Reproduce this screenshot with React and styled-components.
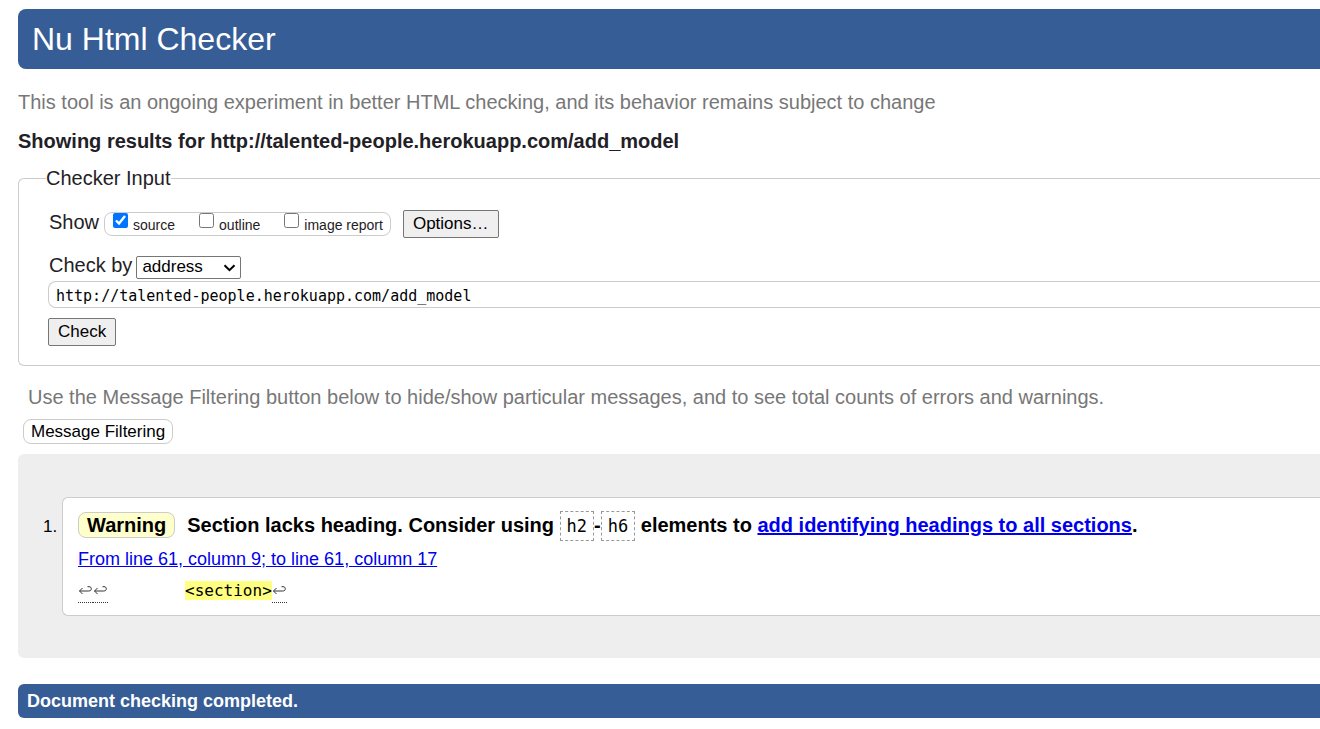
import React from "react";
import styled, { createGlobalStyle } from "styled-components";

const mono = `"DejaVu Sans Mono", "Liberation Mono", monospace`;

const GlobalStyle = createGlobalStyle`
  *, *::before, *::after { box-sizing: border-box; }
  body {
    margin: 0;
    background: #fff;
    color: #1f2126;
    font: 20px/26px "Liberation Sans", Arial, sans-serif;
  }
  button, input, select { font-family: inherit; color: #000; margin: 0; }
`;

const Page = styled.div`
  display: flex;
  flex-direction: column;
  padding: 9px 0 11px 18px;
`;

const Banner = styled.h1`
  margin: 0 0 20px;
  padding: 10px 14px;
  border-radius: 8px 0 0 8px;
  background: #365d95;
  color: #fff;
  font-size: 32px;
  line-height: 40px;
  font-weight: 400;
`;

const Note = styled.p`
  margin: 0;
  color: #777;
`;

const ResultsTitle = styled.h2`
  margin: 13px 0 11px;
  font-size: 20px;
  line-height: 26px;
`;

const InputGroup = styled.fieldset`
  display: flex;
  flex-direction: column;
  min-width: 0;
  margin: 0;
  padding: 19px 0 19px 29px;
  border: 1px solid #ccc;
  border-right: 0;
  border-radius: 6px 0 0 6px;
`;

const GroupTitle = styled.legend`
  margin-left: -2px;
  padding: 0;
`;

const Row = styled.div`
  display: flex;
  align-items: center;
  height: 28px;
  gap: ${(p) => p.$gap}px;
  margin-bottom: ${(p) => p.$after || 0}px;
  padding-left: 1px;
`;

const RowLabel = styled.label`
  align-self: flex-start;
  line-height: 24px;
`;

const ShowSet = styled.div`
  display: flex;
  align-items: center;
  gap: 24px;
  height: 24px;
  margin-right: 7px;
  padding: 0 7px 0 8px;
  border: 1px solid #ccc;
  border-radius: 8px;
`;

const CheckLabel = styled.label`
  display: flex;
  align-items: flex-start;
  gap: 5px;
  height: 22px;
  font-size: 14px;
  line-height: 24px;

  input { width: 15px; height: 15px; }
`;

const Button = styled.button`
  align-self: flex-start;
  height: 28px;
  padding: 0 9px;
  border: 1px solid #767676;
  border-radius: 2px;
  background: #efefef;
  font-size: 17px;
  line-height: 24px;
`;

const SelectBox = styled.span`
  position: relative;
  display: flex;

  svg {
    position: absolute;
    right: 5px;
    top: 8px;
    pointer-events: none;
  }
`;

const MethodSelect = styled.select`
  appearance: none;
  width: 105px;
  height: 23px;
  padding: 0 5px;
  border: 1px solid #767676;
  border-radius: 2px;
  background: #fff;
  font-size: 17px;
  line-height: 20px;
`;

const AddressInput = styled.input`
  width: 100%;
  height: 27px;
  && { margin-bottom: 10px; }
  padding: 2px 7px 0;
  border: 1px solid #ccc;
  border-right: 0;
  border-radius: 8px 0 0 8px;
  && { font-family: ${mono}; }
  font-size: 15px;
`;

const FilterNote = styled(Note)`
  margin: 18px 0 9px 10px;
`;

const FilterButton = styled.button`
  align-self: flex-start;
  height: 25px;
  && { margin: 0 0 10px 5px; }
  padding: 0 7px;
  border: 1px solid #ccc;
  border-radius: 8px;
  background: #fff;
  font-size: 17px;
  line-height: 22px;
`;

const Results = styled.ol`
  margin: 0;
  padding: 43px 0 42px 44px;
  border-radius: 6px 0 0 6px;
  background: #eee;
  color: #000;
  font-size: 17px;
`;

const Message = styled.li`
  padding: 12px 0 9px 15px;
  border: 1px solid #ccc;
  border-right: 0;
  border-radius: 6px 0 0 6px;
  background: #fff;
`;

const MessageText = styled.p`
  margin: 0;
  font-size: 20px;
  line-height: 30px;
  font-weight: 700;
`;

const Badge = styled.strong`
  margin-right: 12px;
  padding: 1px 8px;
  border: 1px solid #ccc;
  border-radius: 8px;
  background: #ffc;
`;

const Code = styled.code`
  padding: 4px 6px;
  border: 1px dashed #999;
  font: 400 17px/26px ${mono};
`;

const Location = styled.p`
  margin: 6px 0 4px;
  font-size: 18px;
  line-height: 26px;
`;

const Link = styled.a`
  color: #00e;
  text-decoration: underline;
`;

const Extract = styled.code`
  display: block;
  white-space: pre;
  font: 16px/30px ${mono};

  mark { background: #ffff80; color: #000; }
`;

const LineBreak = styled.span`
  display: inline-block;
  width: 15px;
  height: 22px;
  border-bottom: 1px dotted #333;
  vertical-align: middle;

  svg { display: block; margin-top: 4px; }
`;

const Done = styled.p`
  margin: 26px 0 0;
  padding: 4px 9px;
  border-radius: 6px 0 0 6px;
  background: #365d95;
  color: #fff;
  font-size: 18px;
  line-height: 26px;
  font-weight: 700;
`;

function Newline() {
  return (
    <LineBreak>
      <svg width="15" height="11" viewBox="0 0 15 11" fill="none" stroke="#333" role="img" aria-label="line break">
        <path d="M4.5 3 1.5 6l3 3M1.5 6h9.2c1.8 0 2.6-.9 2.6-2.2 0-1.3-.8-2.1-2.3-2.1H9.5" />
      </svg>
    </LineBreak>
  );
}

const views = [
  { name: "source", on: true },
  { name: "outline", on: false },
  { name: "image report", on: false },
];

export default function App() {
  return (
    <>
      <GlobalStyle />
      <Page>
        <Banner>Nu Html Checker</Banner>
        <Note>
          This tool is an ongoing experiment in better HTML checking, and its behavior remains subject to change
        </Note>
        <ResultsTitle>Showing results for http://talented-people.herokuapp.com/add_model</ResultsTitle>

        <InputGroup>
          <GroupTitle>Checker Input</GroupTitle>
          <Row $gap={5} $after={15}>
            <RowLabel as="span" id="show">Show</RowLabel>
            <ShowSet role="group" aria-labelledby="show">
              {views.map((v) => (
                <CheckLabel key={v.name}>
                  <input type="checkbox" defaultChecked={v.on} />
                  {v.name}
                </CheckLabel>
              ))}
            </ShowSet>
            <Button type="button">Options…</Button>
          </Row>
          <Row $gap={4}>
            <RowLabel htmlFor="method">Check by</RowLabel>
            <SelectBox>
              <MethodSelect id="method" defaultValue="address">
                <option>address</option>
                <option>file upload</option>
                <option>text input</option>
              </MethodSelect>
              <svg width="13" height="8" viewBox="0 0 13 8" fill="none" stroke="#000" strokeWidth="2" aria-hidden="true">
                <path d="M1.5 1.2 6.5 6.2l5-5" />
              </svg>
            </SelectBox>
          </Row>
          <AddressInput
            type="url"
            aria-label="Address"
            defaultValue="http://talented-people.herokuapp.com/add_model"
          />
          <Button type="submit">Check</Button>
        </InputGroup>

        <FilterNote>
          Use the Message Filtering button below to hide/show particular messages, and to see total counts of errors
          and warnings.
        </FilterNote>
        <FilterButton type="button">Message Filtering</FilterButton>

        <Results>
          <Message>
            <MessageText>
              <Badge>Warning</Badge>
              Section lacks heading. Consider using <Code>h2</Code>-<Code>h6</Code> elements to{" "}
              <Link href="#headings">add identifying headings to all sections</Link>.
            </MessageText>
            <Location>
              <Link href="#l61c17">From line 61, column 9; to line 61, column 17</Link>
            </Location>
            <Extract>
              <Newline />
              <Newline />
              {"        "}
              <mark>{"<section>"}</mark>
              <Newline />
            </Extract>
          </Message>
        </Results>

        <Done>Document checking completed.</Done>
      </Page>
    </>
  );
}
